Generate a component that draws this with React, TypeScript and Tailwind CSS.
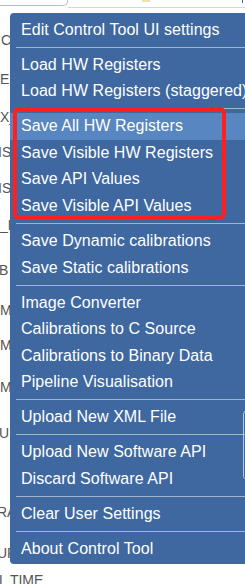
import React from "react";

type Entry = { label: string; active?: boolean } | "sep";

const entries: Entry[] = [
  { label: "Edit Control Tool UI settings" },
  "sep",
  { label: "Load HW Registers" },
  { label: "Load HW Registers (staggered)" },
  "sep",
  { label: "Save All HW Registers", active: true },
  { label: "Save Visible HW Registers" },
  { label: "Save API Values" },
  { label: "Save Visible API Values" },
  "sep",
  { label: "Save Dynamic calibrations" },
  { label: "Save Static calibrations" },
  "sep",
  { label: "Image Converter" },
  { label: "Calibrations to C Source" },
  { label: "Calibrations to Binary Data" },
  { label: "Pipeline Visualisation" },
  "sep",
  { label: "Upload New XML File" },
  "sep",
  { label: "Upload New Software API" },
  { label: "Discard Software API" },
  "sep",
  { label: "Clear User Settings" },
  "sep",
  { label: "About Control Tool" },
];

const bgLabels: { text: string; cls: string }[] = [
  { text: "C", cls: "mt-[24px] ml-[1px]" },
  { text: "E", cls: "mt-[23px]" },
  { text: "X_", cls: "mt-[22px]" },
  { text: "IS", cls: "mt-[19px] -ml-[2px]" },
  { text: "IS", cls: "mt-[20px] -ml-[2px]" },
  { text: "_D", cls: "mt-[21px]" },
  { text: "B", cls: "mt-[29px] -ml-[1px]" },
  { text: "M", cls: "mt-[24px]" },
  { text: "M", cls: "mt-[19px]" },
  { text: "M", cls: "mt-[26px]" },
  { text: "U", cls: "mt-[30px] -ml-[1px]" },
  { text: "RA", cls: "mt-[63px] -ml-[3px]" },
  { text: "UR", cls: "mt-[25px] -ml-[3px]" },
  { text: "L TIME", cls: "mt-[11px] -ml-px" },
];

export default function App() {
  return (
    <div className="relative w-[245px] h-[584px] overflow-hidden bg-white font-['Liberation_Sans',Arial,sans-serif]">
      {/* underlying page */}
      <div className="flex flex-col">
        <div className="flex h-[8px] items-start">
          <div className="w-[68px] h-[6px] border-b border-r border-[#aebdd0] rounded-br-[5px]" />
          <div className="flex-1 h-[8px] border-b border-[#c9d8ea] relative">
            <div className="absolute left-[74px] top-0 w-[8px] h-[2px] bg-[#efe2b0]" />
            <div className="absolute right-[2px] top-0 w-[1px] h-[3px] bg-[#3f6fb0]" />
          </div>
        </div>
        {bgLabels.map((l, i) => (
          <div
            key={i}
            className={`h-[16px] leading-[16px] text-[14px] text-[#555555] whitespace-nowrap ${l.cls}`}
          >
            {l.text}
          </div>
        ))}
      </div>

      {/* dropdown menu */}
      <div className="absolute left-[10px] top-[13px] w-[260px] h-[551px] bg-[#3e689f] rounded-[4px] pt-[3.7px] pb-[1.4px] flex flex-col text-white text-[16px] tracking-[0.05px]">
        {entries.map((e, i) =>
          e === "sep" ? (
            <div key={i} className="ml-[6px] mt-[3.5px] mb-[3.9px] h-px bg-[#a3b4ca]" />
          ) : (
            <div
              key={i}
              className={`h-[26.6px] leading-[26.6px] pl-[11px] whitespace-nowrap ${
                e.active ? "bg-[#5886c0]" : ""
              }`}
            >
              {e.label}
            </div>
          )
        )}
        {/* red annotation box */}
        <div className="absolute left-[3px] top-[94px] w-[213px] h-[113px] border-4 border-[#ff1f1f] rounded-[6px]" />
      </div>

      {/* element edge peeking at right */}
      <div className="absolute left-[243px] top-[410px] w-[8px] h-[70px] border border-[#b9c5d4] rounded-[4px]" />
    </div>
  );
}
